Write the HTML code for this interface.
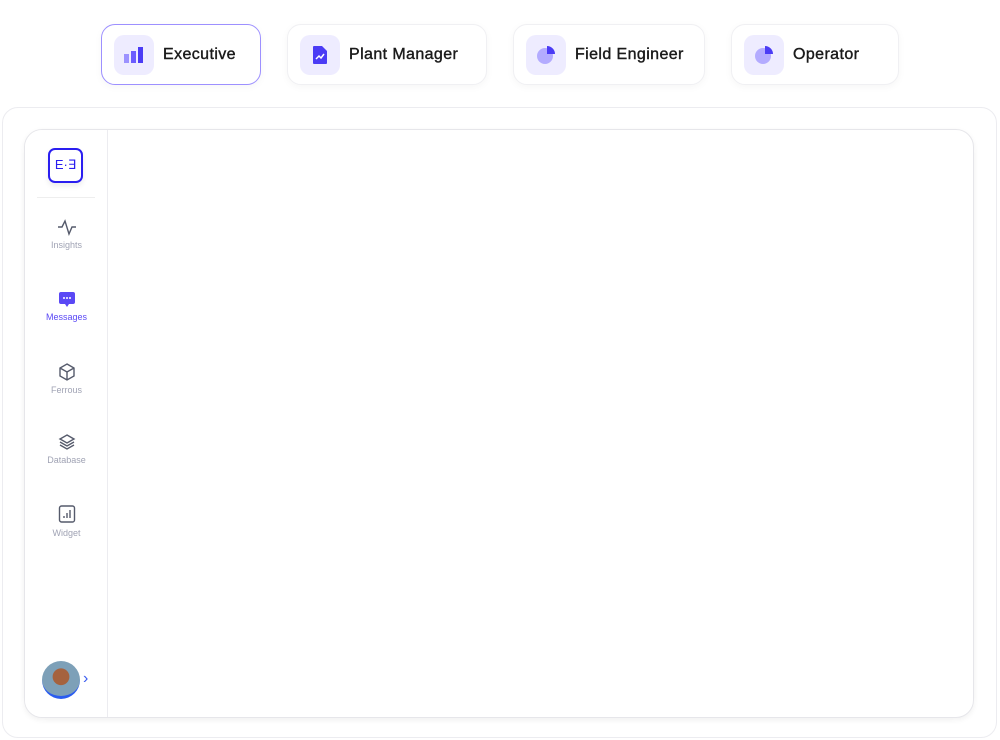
<!DOCTYPE html>
<html><head><style>
*{margin:0;padding:0;box-sizing:border-box}
body{width:1000px;height:740px;background:#fff;font-family:"Liberation Sans",sans-serif;position:relative;overflow:hidden}
.tab{position:absolute;top:24px;height:61px;border-radius:14px;background:#fff;border:1px solid #f0f0f3;box-shadow:0 2px 8px rgba(0,0,0,.04);display:flex;align-items:center;padding-left:12px;font-size:16px;color:#1a1a1a;font-weight:normal;-webkit-text-stroke:0.4px #1a1a1a;letter-spacing:0.4px}
.tab.act{border:1px solid #9d90ff}
.ib{width:40px;height:40px;border-radius:10px;background:#eeecff;display:flex;align-items:center;justify-content:center;margin-right:9px}
.outer{position:absolute;left:2px;top:107px;width:995px;height:631px;border:1px solid #ececf0;border-radius:16px}
.inner{position:absolute;left:24px;top:129px;width:950px;height:589px;border:1px solid #e6e6ea;border-radius:18px;box-shadow:0 2px 6px rgba(0,0,0,.06);overflow:hidden}
.side{position:absolute;left:0;top:0;width:83px;height:100%;border-right:1px solid #ececf0;background:#fff}
.it{position:absolute;left:0;width:83px;text-align:center;font-size:9px;color:#a0a3b4}
.it svg{display:block;margin:0 auto 4px}
</style></head><body>
<div class="tab act" style="left:101px;width:160px"><div class="ib"><svg width="22" height="18"><rect x="1" y="8" width="5" height="9" fill="#9c92ff"/><rect x="8" y="5" width="5" height="12" fill="#6b5cff"/><rect x="15" y="1" width="5" height="16" fill="#4b3cf5"/></svg></div>Executive</div>
<div class="tab" style="left:287px;width:200px"><div class="ib"><svg width="16" height="20"><path d="M1 2q0-1 1-1h8l5 5v12q0 1-1 1H2q-1 0-1-1z" fill="#4b3cf5"/><path d="M4 14l3-3 2 2 3-4" stroke="#fff" stroke-width="1.5" fill="none"/></svg></div>Plant Manager</div>
<div class="tab" style="left:513px;width:192px"><div class="ib"><svg width="22" height="22"><circle cx="10" cy="12" r="8" fill="#b3abff"/><path d="M12 2a8 8 0 0 1 8 8h-8z" fill="#4b3cf5"/></svg></div>Field Engineer</div>
<div class="tab" style="left:731px;width:168px"><div class="ib"><svg width="22" height="22"><circle cx="10" cy="12" r="8" fill="#b3abff"/><path d="M12 2a8 8 0 0 1 8 8h-8z" fill="#4b3cf5"/></svg></div>Operator</div>
<div class="outer"></div>
<div class="inner"><div class="side">
<div style="position:absolute;left:23px;top:18px;width:35px;height:35px;border:2px solid #2a1ef0;border-radius:7px;font-size:13px;color:#2a1ef0;text-align:center;line-height:30px;box-shadow:0 3px 6px rgba(0,0,0,.08)">E·∃</div>
<div style="position:absolute;left:12px;top:67px;width:58px;border-top:1px solid #eee"></div>
<div class="it" style="top:88px"><svg width="20" height="18"><path d="M1 9h4l3-6 4 13 3-7h4" stroke="#555a6b" stroke-width="1.4" fill="none"/></svg>Insights</div>
<div class="it" style="top:160px;color:#5a48f5"><svg width="18" height="18"><path d="M3 2h12q2 0 2 2v8q0 2-2 2h-4l-2 3-2-3H3q-2 0-2-2V4q0-2 2-2z" fill="#5a48f5"/><circle cx="6" cy="8" r="1" fill="#fff"/><circle cx="9" cy="8" r="1" fill="#fff"/><circle cx="12" cy="8" r="1" fill="#fff"/></svg>Messages</div>
<div class="it" style="top:233px"><svg width="18" height="18"><path d="M9 1l7 4v8l-7 4-7-4V5zM2 5l7 4 7-4M9 9v8" stroke="#555a6b" stroke-width="1.4" fill="none"/></svg>Ferrous</div>
<div class="it" style="top:303px"><svg width="18" height="18"><path d="M9 2l7 4-7 4-7-4zM2 9l7 4 7-4M2 12l7 4 7-4" stroke="#555a6b" stroke-width="1.4" fill="none"/></svg>Database</div>
<div class="it" style="top:374px"><svg width="18" height="20"><rect x="1.5" y="2" width="15" height="16" rx="2" stroke="#555a6b" stroke-width="1.4" fill="none"/><path d="M6 14v-2M9 14V9M12 14V6" stroke="#555a6b" stroke-width="1.4"/></svg>Widget</div>
<div style="position:absolute;left:17px;top:531px;width:38px;height:38px;border-radius:50%;background:radial-gradient(circle at 50% 45%,#a5623f 0 30%,#7da0b8 32%);border-bottom:3px solid #2a5cf0"></div>
<div style="position:absolute;left:58px;top:540px;color:#3a5cf0;font-size:16px">›</div>
</div></div>
</body></html>
